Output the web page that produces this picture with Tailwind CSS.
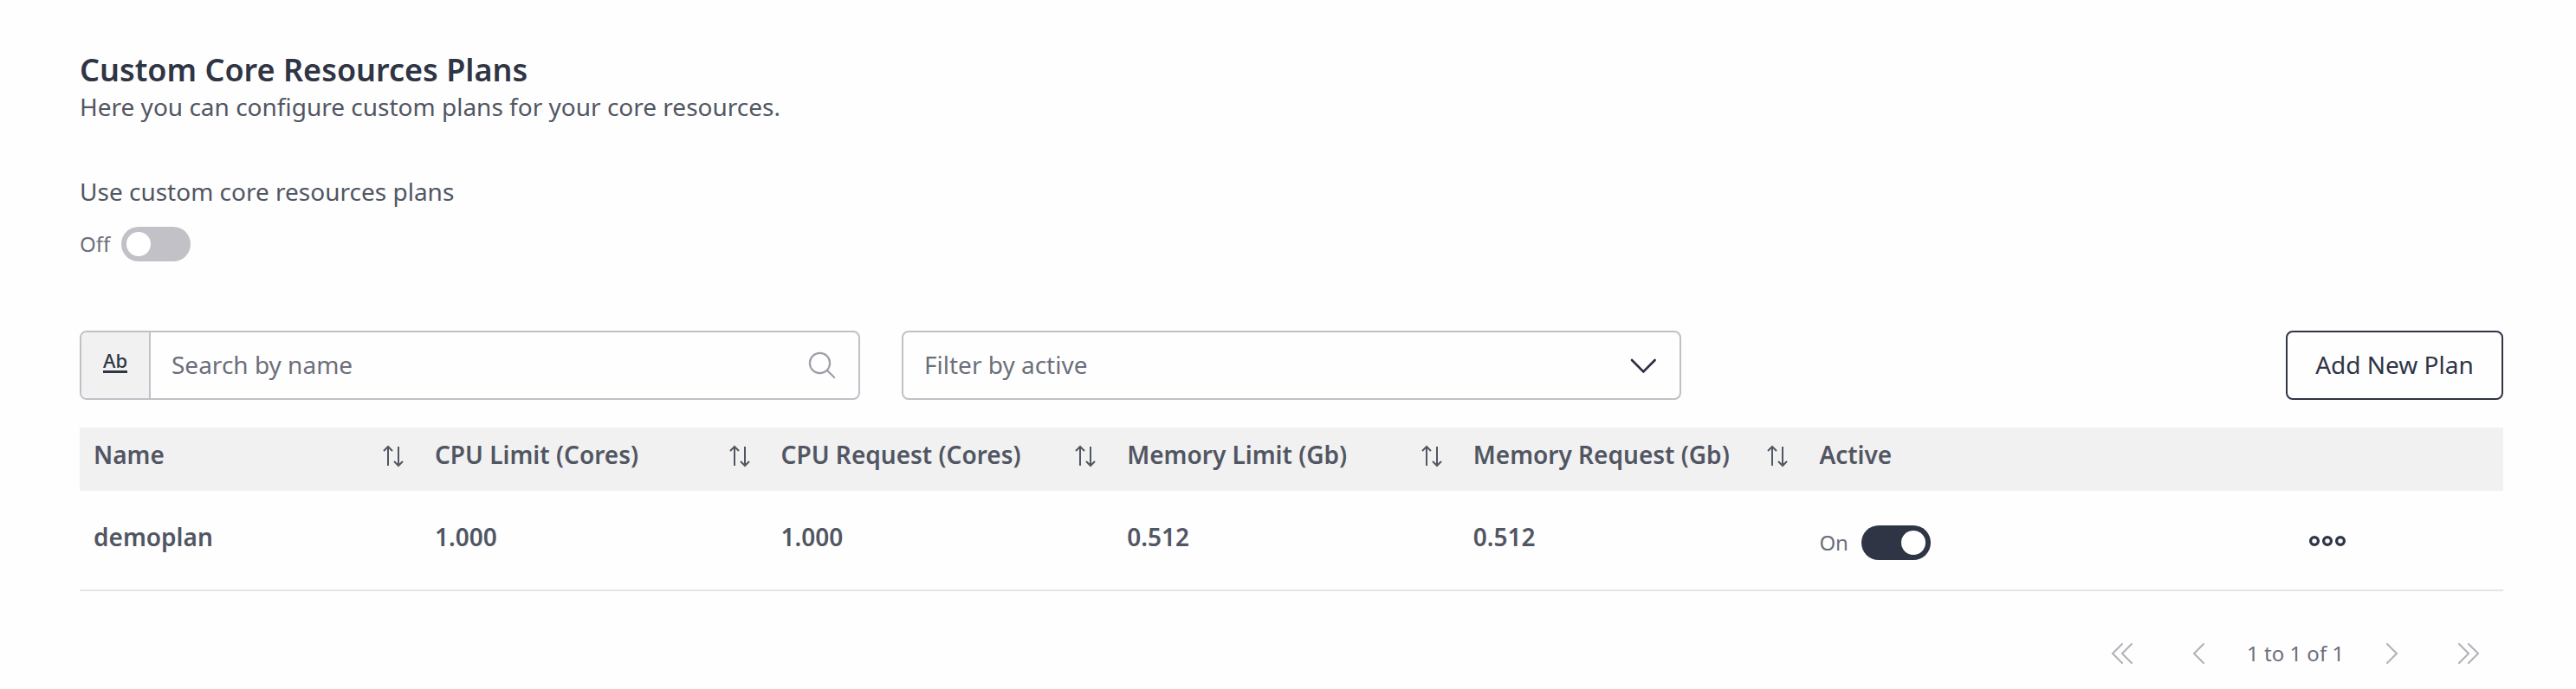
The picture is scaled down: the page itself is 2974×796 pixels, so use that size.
<!DOCTYPE html>
<html lang="en">
<head>
<meta charset="utf-8">
<title>Custom Core Resources Plans</title>
<script src="https://cdn.jsdelivr.net/npm/@tailwindcss/browser@4"></script>
</head>
<body class="bg-[#fefefe] font-['Noto_Sans',sans-serif] text-[28px] leading-[38px] text-[#515663]">
<svg class="hidden">
  <symbol id="sort" viewBox="0 0 24 26"><path d="M6 24V2M1 7l5-5 5 5M18 2v22M13 19l5 5 5-5" fill="none" stroke="currentColor" stroke-width="2"/></symbol>
</svg>
<main class="flex h-[796px] w-[2974px] flex-col pt-14 pr-[84px] pl-[92px]">
  <h1 class="-mb-px text-[36px] leading-[49px] font-semibold text-[#2f3545]">Custom Core Resources Plans</h1>
  <p>Here you can configure custom plans for your core resources.</p>
  <p class="mt-[60px]">Use custom core resources plans</p>
  <div class="mt-[22px] flex h-10 items-center">
    <span class="w-12 text-[24px] leading-10 text-[#6b6f7b]">Off</span>
    <span class="flex h-10 w-20 items-center rounded-full bg-[#c1c1c7] px-1.5"><span class="size-7 rounded-full bg-white"></span></span>
  </div>

  <div class="mt-20 flex h-20 shrink-0 items-stretch">
    <div class="flex w-[901px] overflow-hidden rounded-lg border-2 border-[#c0c0c7] text-[#6b6f7b]">
      <div class="flex w-20 justify-center border-r-2 border-[#c0c0c7] bg-[#f1f1f1] pt-[27px]">
        <span class="h-[20px] w-7 border-b-[3px] border-[#2f3545] text-center text-[22px] leading-[17px] font-medium text-[#2f3545]"><span class="-mx-1 block -translate-y-[3px]">Ab</span></span>
      </div>
      <div class="flex flex-1 items-center justify-between pr-[26px] pb-0.5 pl-6">
        <span>Search by name</span>
        <svg class="size-8 translate-y-px text-[#9d9fa8]" viewBox="0 0 32 32" fill="none" stroke="currentColor" stroke-width="2.2" stroke-linecap="round"><circle cx="13.5" cy="13.5" r="11.6"/><path d="M22 22l8.2 8"/></svg>
      </div>
    </div>
    <div class="ml-12 flex w-[900px] items-center justify-between rounded-lg border-2 border-[#c0c0c7] pr-[26px] pb-0.5 pl-6 text-[#6b6f7b]">
      <span>Filter by active</span>
      <svg class="h-5 w-8 translate-y-[2px] text-[#292e40]" viewBox="0 0 32 20" fill="none" stroke="currentColor" stroke-width="2.6" stroke-linecap="round"><path d="M3 3l13.3 13.5L29.6 3"/></svg>
    </div>
    <button class="ml-auto w-[251px] rounded-lg border-2 border-[#2f3545] pb-0.5 text-[#2f3545]">Add New Plan</button>
  </div>

  <div class="mt-8 grid h-[73px] shrink-0 grid-cols-[394px_399.6px_399.6px_399.6px_399.6px_1fr] bg-[#f1f1f1] pt-3 font-semibold">
    <div class="flex justify-between pr-5 pl-4"><span>Name</span><svg class="mt-2 h-[26px] w-6"><use href="#sort"/></svg></div>
    <div class="flex justify-between pr-5 pl-4"><span>CPU Limit (Cores)</span><svg class="mt-2 h-[26px] w-6"><use href="#sort"/></svg></div>
    <div class="flex justify-between pr-5 pl-4"><span>CPU Request (Cores)</span><svg class="mt-2 h-[26px] w-6"><use href="#sort"/></svg></div>
    <div class="flex justify-between pr-5 pl-4"><span>Memory Limit (Gb)</span><svg class="mt-2 h-[26px] w-6"><use href="#sort"/></svg></div>
    <div class="flex justify-between pr-5 pl-4"><span>Memory Request (Gb)</span><svg class="mt-2 h-[26px] w-6"><use href="#sort"/></svg></div>
    <div class="pl-4">Active</div>
  </div>
  <div class="grid h-[116px] shrink-0 grid-cols-[394px_399.6px_399.6px_399.6px_399.6px_565px_1fr] border-b-2 border-[#e5e5e5] pt-[34px] font-semibold">
    <div class="pl-4">demoplan</div>
    <div class="pl-4">1.000</div>
    <div class="pl-4">1.000</div>
    <div class="pl-4">0.512</div>
    <div class="pl-4">0.512</div>
    <div class="mt-1.5 flex h-10 items-center pl-4">
      <span class="w-[48.6px] text-[24px] leading-10 font-normal text-[#6b6f7b]">On</span>
      <span class="flex h-10 w-20 items-center justify-end rounded-full bg-[#2f3545] px-1.5"><span class="size-7 rounded-full bg-white"></span></span>
    </div>
    <div class="pt-[17px] pl-4"><svg class="h-[14px] w-11" viewBox="0 0 44 14" fill="none" stroke="#2f3545" stroke-width="3.3"><circle cx="7" cy="7" r="4.4"/><circle cx="22" cy="7" r="4.4"/><circle cx="37" cy="7" r="4.4"/></svg></div>
  </div>

  <div class="mt-[54px] flex h-9 items-center justify-end pr-[27px] text-[24px] text-[#6b6f7b]">
    <svg class="h-[26px] w-[26px] text-[#b0b0b8]" viewBox="0 0 26 26" fill="none" stroke="currentColor" stroke-width="2" stroke-linecap="round"><path d="M13 2L2 13l11 11M24 2L13 13l11 11"/></svg>
    <svg class="ml-[68px] h-[26px] w-[15px] text-[#b0b0b8]" viewBox="0 0 15 26" fill="none" stroke="currentColor" stroke-width="2" stroke-linecap="round"><path d="M13 2L2 13l11 11"/></svg>
    <span class="ml-12 w-[160px]">1 to 1 of 1</span>
    <svg class="h-[26px] w-[15px] text-[#b0b0b8]" viewBox="0 0 15 26" fill="none" stroke="currentColor" stroke-width="2" stroke-linecap="round"><path d="M2 2l11 11L2 24"/></svg>
    <svg class="ml-[68px] h-[26px] w-[26px] text-[#b0b0b8]" viewBox="0 0 26 26" fill="none" stroke="currentColor" stroke-width="2" stroke-linecap="round"><path d="M2 2l11 11L2 24M13 2l11 11-11 11"/></svg>
  </div>
</main>
</body>
</html>
